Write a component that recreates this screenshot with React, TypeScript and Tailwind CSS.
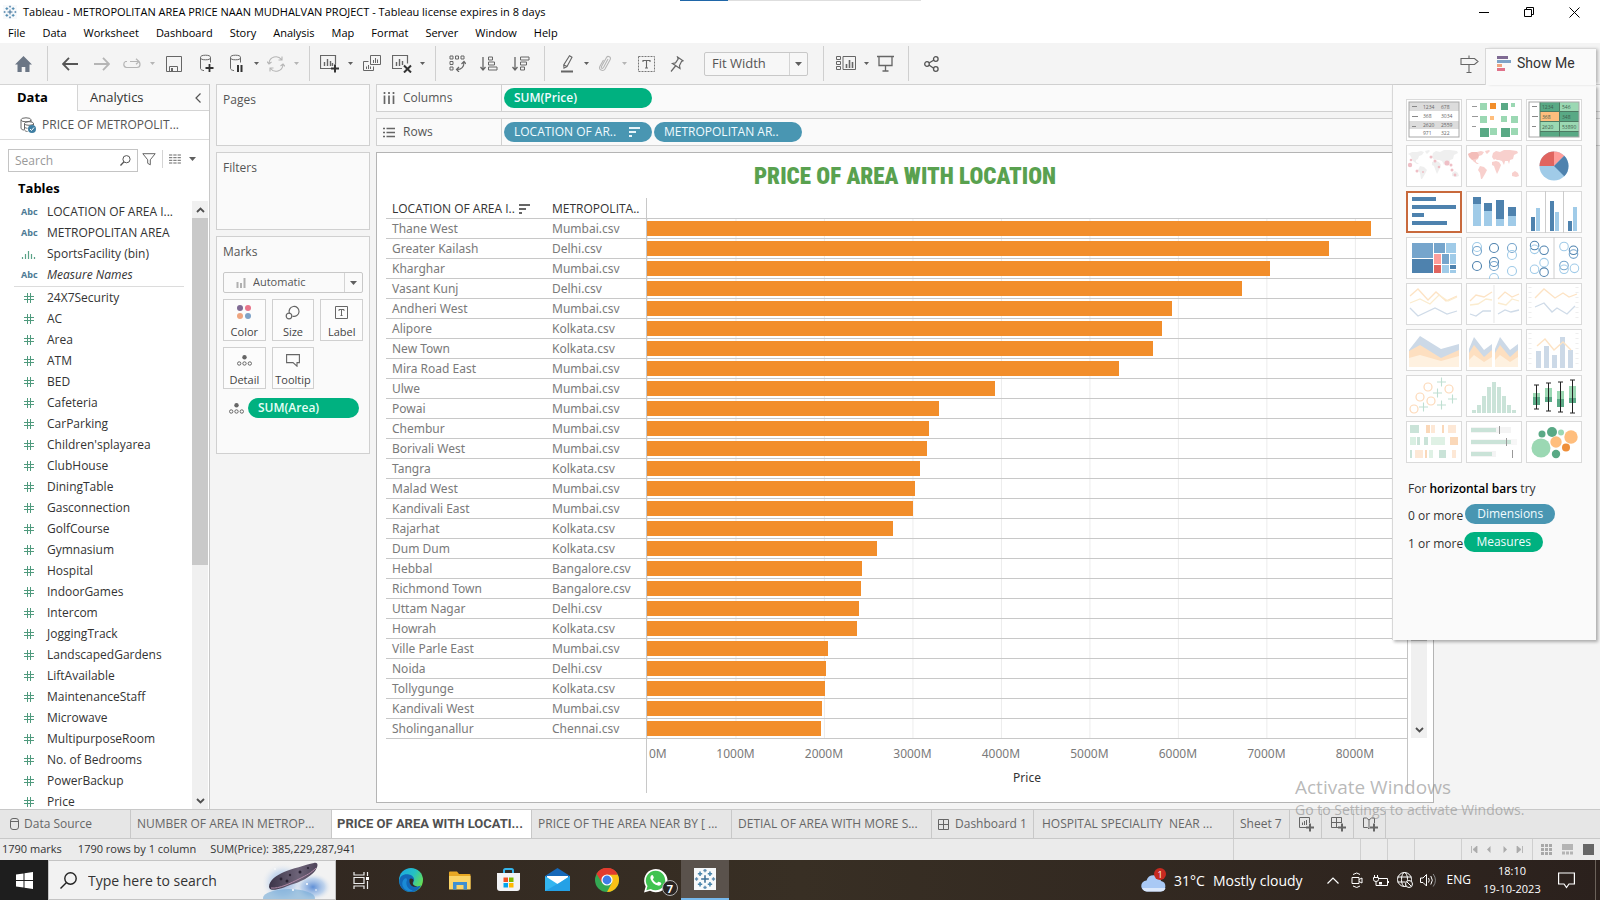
import React from "react";

const dimensions = [
  { kind: "abc", name: "LOCATION OF AREA I..." },
  { kind: "abc", name: "METROPOLITAN AREA" },
  { kind: "bin", name: "SportsFacility (bin)" },
  { kind: "abc", name: "Measure Names", italic: true },
];

const measures = [
  "24X7Security", "AC", "Area", "ATM", "BED", "Cafeteria", "CarParking", "Children'splayarea",
  "ClubHouse", "DiningTable", "Gasconnection", "GolfCourse", "Gymnasium", "Hospital",
  "IndoorGames", "Intercom", "JoggingTrack", "LandscapedGardens", "LiftAvailable",
  "MaintenanceStaff", "Microwave", "MultipurposeRoom", "No. of Bedrooms", "PowerBackup", "Price",
];

const AXIS_MAX = 8588;
const ticks = [1000, 2000, 3000, 4000, 5000, 6000, 7000, 8000];
const pct = (v: number) => `${(v / AXIS_MAX) * 100}%`;

const rows: [string, string, number][] = [
  ["Thane West", "Mumbai.csv", 8185],
  ["Greater Kailash", "Delhi.csv", 7707],
  ["Kharghar", "Mumbai.csv", 7044],
  ["Vasant Kunj", "Delhi.csv", 6721],
  ["Andheri West", "Mumbai.csv", 5937],
  ["Alipore", "Kolkata.csv", 5822],
  ["New Town", "Kolkata.csv", 5718],
  ["Mira Road East", "Mumbai.csv", 5338],
  ["Ulwe", "Mumbai.csv", 3931],
  ["Powai", "Mumbai.csv", 3297],
  ["Chembur", "Mumbai.csv", 3182],
  ["Borivali West", "Mumbai.csv", 3159],
  ["Tangra", "Kolkata.csv", 3089],
  ["Malad West", "Mumbai.csv", 3032],
  ["Kandivali East", "Mumbai.csv", 3009],
  ["Rajarhat", "Kolkata.csv", 2779],
  ["Dum Dum", "Kolkata.csv", 2594],
  ["Hebbal", "Bangalore.csv", 2433],
  ["Richmond Town", "Bangalore.csv", 2420],
  ["Uttam Nagar", "Delhi.csv", 2397],
  ["Howrah", "Kolkata.csv", 2374],
  ["Ville Parle East", "Mumbai.csv", 2040],
  ["Noida", "Delhi.csv", 2028],
  ["Tollygunge", "Kolkata.csv", 2017],
  ["Kandivali West", "Mumbai.csv", 1982],
  ["Sholinganallur", "Chennai.csv", 1966],
];

type SvgProps = { w: number; h: number; children: React.ReactNode; className?: string };
const Svg = ({ w, h, children, className = "" }: SvgProps) => (
  <svg width={w} height={h} viewBox={`0 0 ${w} ${h}`} fill="none" className={`block shrink-0 ${className}`} aria-hidden="true">
    {children}
  </svg>
);

const Caret = ({ light = false }: { light?: boolean }) => (
  <Svg w={7} h={4}><path d="M0 0h7L3.5 4z" fill={light ? "#b5b5b5" : "#5f5f5f"} /></Svg>
);
const CaretButton = ({ label, light = false }: { label: string; light?: boolean }) => (
  <button aria-label={label} className="flex h-full w-3 shrink-0 items-center justify-center">
    <Svg w={5} h={3}><path d="M0 0h5L2.5 3z" fill={light ? "#b5b5b5" : "#5f5f5f"} /></Svg>
  </button>
);
const Sep = ({ className = "" }: { className?: string }) => <span className={`h-[35px] w-px shrink-0 bg-[#cfcfcf] ${className}`} />;

const Tool = ({ label, width = "w-8", children }: { label: string; width?: string; children: React.ReactNode }) => (
  <button aria-label={label} className={`flex h-full shrink-0 items-center justify-center ${width}`}>{children}</button>
);

const INK = "#666";
const PALE = "#b5b5b5";

const Cylinder = () => (
  <>
    <ellipse cx="6.5" cy="3.5" rx="5" ry="2.3" stroke={INK} />
    <path d="M1.500 3.500v11c0 1 1.500 1.800 3.500 2.100M11.500 3.500v5" stroke={INK} />
  </>
);

const TableauMark = ({ size }: { size: number }) => (
  <svg width={size} height={size} viewBox="0 0 20 20" fill="none" className="block shrink-0" aria-hidden="true">
    <rect width="20" height="20" fill="#f7f9fb" />
    <path d="M10 6.500v7M6.500 10h7" stroke="#3c6e96" strokeWidth="1.400" />
    <path d="M10 .8v3M8.500 2.300h3M10 16.200v3M8.500 17.700h3M2.300 8.500v3M.8 10h3M17.700 8.500v3M16.200 10h3" stroke="#5d8cb0" strokeWidth="1.200" />
    <path d="M5.500 3.200v4M3.500 5.200h4M14.500 3.200v4M12.500 5.200h4M5.500 12.800v4M3.500 14.800h4M14.500 12.800v4M12.500 14.800h4" stroke="#4a86ad" strokeWidth="1.400" />
  </svg>
);

const SortBars = ({ color }: { color: string }) => (
  <Svg w={11} h={10}><path d="M0 1h11M0 5h7M0 9h3" stroke={color} strokeWidth="2" /></Svg>
);

const DetailDots = () => (
  <Svg w={15} h={11}>
    <circle cx="7.500" cy="2.200" r="2.200" fill={INK} />
    <circle cx="2.200" cy="8.500" r="1.700" stroke={INK} /><circle cx="7.500" cy="8.500" r="1.700" stroke={INK} /><circle cx="12.800" cy="8.500" r="1.700" stroke={INK} />
  </Svg>
);

function TitleAndMenu() {
  const menus = ["File", "Data", "Worksheet", "Dashboard", "Story", "Analysis", "Map", "Format", "Server", "Window", "Help"];
  return (
    <header className="relative shrink-0 bg-white text-[11px] text-black">
      <div className="absolute left-[680px] top-0 flex h-px w-[241px] bg-[#dedede]"><span className="w-12 bg-[#1f66a8]" /></div>
      <div className="flex h-6 items-center pl-[3px]">
        <TableauMark size={14} />
        <h1 className="ml-1.5 text-[11px]">Tableau - METROPOLITAN AREA PRICE NAAN MUDHALVAN PROJECT - Tableau license expires in 8 days</h1>
        <div className="ml-auto flex items-center gap-[35px] pr-5">
          <button aria-label="Minimize"><Svg w={10} h={10}><path d="M0 5.500h10" stroke="#000" /></Svg></button>
          <button aria-label="Restore"><Svg w={10} h={10}><path d="M.5 2.500h7v7h-7zM2.500 2.500v-2h7v7h-2" stroke="#000" /></Svg></button>
          <button aria-label="Close"><Svg w={11} h={11}><path d="M.5.5l10 10M10.500.5l-10 10" stroke="#000" /></Svg></button>
        </div>
      </div>
      <nav className="flex h-[19px] items-center gap-[17px] px-2">
        {menus.map((m) => <button key={m}>{m}</button>)}
      </nav>
    </header>
  );
}

function Toolbar() {
  return (
    <div className="flex h-[41px] shrink-0 items-center bg-[#f4f4f4]" role="toolbar" aria-label="Worksheet toolbar">
      <Tool label="Home" width="w-[47px]">
        <Svg w={17} h={16}><path d="M8.500 0L17 8.500h-2.500V16h-4.200v-5H6.700v5H2.500V8.500H0z" fill="#6b7685" /></Svg>
      </Tool>
      <Sep className="mr-1.5" />
      <Tool label="Back"><Svg w={16} h={14}><path d="M7 .8L1 7l6 6.200M1 7h15" stroke="#555" strokeWidth="1.800" /></Svg></Tool>
      <Tool label="Forward"><Svg w={16} h={14}><path d="M9 .8L15 7l-6 6.200M15 7H0" stroke={PALE} strokeWidth="1.800" /></Svg></Tool>
      <Tool label="Replay" width="w-7"><Svg w={18} h={12}><path d="M4 3.500H2.500Q.8 4 .8 6.500T3.500 9.500H14q3 0 3-3t-2.500-3H7M13 .8l3 2.700-3 2.700" stroke={PALE} strokeWidth="1.200" /></Svg></Tool>
      <CaretButton label="Replay options" light />
      <Tool label="Save"><Svg w={16} h={16}><path d="M.5.500h15v15H.5zM3.500 15.500v-5h8v5" stroke={INK} /><path d="M5 12h2v3.500H5z" fill={INK} /></Svg></Tool>
      <Tool label="New data source"><Svg w={15} h={19}><Cylinder /><path d="M10.500 10v8M6.500 14h8" stroke="#333" strokeWidth="1.800" /></Svg></Tool>
      <Tool label="Pause auto updates" width="w-7"><Svg w={15} h={19}><Cylinder /><path d="M9 11v7M12.500 11v7" stroke="#333" strokeWidth="2" /></Svg></Tool>
      <CaretButton label="Pause options" />
      <Tool label="Refresh" width="w-7"><Svg w={18} h={16}><path d="M2 7a7 7 0 0 1 12.500-3.500M16 9a7 7 0 0 1-12.500 3.500M15 .5v3.500h-3.500M3 15.500V12h3.500M0 5.500L2 8l2.500-2M18 10.500L16 8l-2.500 2" stroke={PALE} strokeWidth="1.100" /></Svg></Tool>
      <CaretButton label="Refresh options" light />
      <Sep className="ml-[7px] mr-1.5" />
      <Tool label="New worksheet" width="w-7"><Svg w={20} h={18}><path d="M12 13.500H.5v-13h15v9" stroke={INK} strokeWidth="1.200" /><path d="M4.500 7v4M7.500 4v7M10.500 6v5M12.500 8v3" stroke={INK} strokeWidth="1.400" /><path d="M15 9.500v8M11 13.500h8" stroke="#333" strokeWidth="2" /></Svg></Tool>
      <CaretButton label="New worksheet options" />
      <Tool label="Duplicate"><Svg w={18} h={17}><path d="M7.500.5h10v9h-10zM5.500 6.500h-5v9h10v-4" stroke={INK} /><path d="M10.500 5v3M12.500 3v5M14.500 4.500v3.500M3.500 11.500v2.500M5.500 10v4M7.500 11.500V14" stroke={INK} /></Svg></Tool>
      <Tool label="Clear sheet" width="w-7"><Svg w={20} h={18}><path d="M10 13.500H.5v-13h15v8" stroke={INK} strokeWidth="1.200" /><path d="M4.500 7v4M7.500 4v7M10.500 6v4" stroke={INK} strokeWidth="1.400" /><path d="M12 10.500l7 7M19 10.500l-7 7" stroke="#333" strokeWidth="2" /></Svg></Tool>
      <CaretButton label="Clear options" />
      <Sep className="ml-[7px] mr-[5px]" />
      <Tool label="Swap rows and columns"><Svg w={17} h={17}><path d="M1 1h3v3H1zM6.500 1h3v3h-3zM12 1h3v3h-3zM1 6.500h3v3H1zM1 12h3v3H1z" stroke={INK} /><path d="M15 7.500c0 4-2.500 7-7 7M12.500 9l2.500-2.500L17 9M10 12l-2.500 2.500L10 17" stroke={INK} strokeWidth="1.200" /></Svg></Tool>
      <Tool label="Sort ascending"><Svg w={18} h={16}><path d="M3 1v12M.5 11L3 14l2.500-3" stroke={INK} strokeWidth="1.300" /><path d="M8.500 1h4v3h-4zM8.500 6h6v3h-6zM8.500 11h8.500v3H8.500z" stroke={INK} /></Svg></Tool>
      <Tool label="Sort descending"><Svg w={18} h={16}><path d="M3 1v12M.5 11L3 14l2.500-3" stroke={INK} strokeWidth="1.300" /><path d="M8.500 1H17v3H8.500zM8.500 6h6v3h-6zM8.500 11h4v3h-4z" stroke={INK} /></Svg></Tool>
      <Sep className="ml-[7px] mr-[9px]" />
      <Tool label="Highlight" width="w-[26px]"><Svg w={14} h={18}><path d="M9.500.8l2.500 1.400-5 9.300-3 1.700-.3-3.300zM4 10l3 1.500" stroke={INK} strokeWidth="1.100" /><path d="M1 16.500h12" stroke={INK} strokeWidth="2" /></Svg></Tool>
      <CaretButton label="Highlight options" />
      <Tool label="Group members" width="w-[26px]"><Svg w={14} h={17}><path d="M10 4L5.500 12.500c-1 1.600-2.800.7-2-1L8.500 2.500c1.300-2.200 5-.7 3.700 2L7 14c-1.700 2.800-6.800 1-5.200-2.500L5.500 5" stroke={PALE} strokeWidth="1.100" /></Svg></Tool>
      <CaretButton label="Group options" light />
      <Tool label="Show mark labels"><Svg w={17} h={16}><rect x=".5" y=".5" width="16" height="15" stroke="#777" strokeDasharray="2 1" /><path d="M5 6V4.500h7V6M8.500 4.500v7.500M7 12h3" stroke={INK} strokeWidth="1.100" /></Svg></Tool>
      <Tool label="Fix axes" width="w-[30px]"><Svg w={14} h={16}><path d="M7.500 1l5.500 3.800-1.500.7-2 4 .5 3-7.500-5 3-.6 2.600-3.700zM5.500 10L1 15.500" stroke={INK} strokeWidth="1.200" /></Svg></Tool>
      <label className="relative ml-3 flex h-6 w-[104px] shrink-0 items-center rounded-xs border border-[#c8c8c8] bg-[#f7f7f7]">
        <span className="sr-only">Fit</span>
        <select className="h-full w-full appearance-none bg-transparent pl-[7px] text-[13px] text-[#555] outline-none"><option>Fit Width</option></select>
        <span className="pointer-events-none absolute inset-y-0 right-0 flex w-[18px] items-center justify-center border-l border-[#d4d4d4]"><Caret /></span>
      </label>
      <Sep className="ml-[15px] mr-2" />
      <Tool label="Show or hide cards" width="w-7"><Svg w={20} h={15}><path d="M.5.500h4v3h-4zM.5 5.500h4v3h-4zM.5 10.500h4v3h-4zM7 .500h12.500v13H7z" stroke={INK} /><path d="M10.500 8v4M13.500 4v8M16.500 6v6" stroke={INK} strokeWidth="1.600" /></Svg></Tool>
      <CaretButton label="Card options" />
      <Tool label="Presentation mode" width="w-[26px]"><Svg w={17} h={17}><path d="M0 1.500h17M2 1.500v9h13v-9M8.500 10.500v5M5.500 16h6" stroke={INK} strokeWidth="1.300" /></Svg></Tool>
      <Sep className="ml-2.5 mr-1.5" />
      <Tool label="Share"><Svg w={15} h={16}><path d="M5 7l5-3M5 9l5 3.500" stroke="#555" strokeWidth="1.300" /><circle cx="3" cy="8" r="2.300" stroke="#555" strokeWidth="1.300" /><circle cx="11.800" cy="3" r="2.300" stroke="#555" strokeWidth="1.300" /><circle cx="11.800" cy="13" r="2.300" stroke="#555" strokeWidth="1.300" /></Svg></Tool>
      <span className="ml-auto mr-[115px]">
        <Tool label="Guide"><Svg w={19} h={18}><path d="M1 3.500h13.500l3.500 3-3.500 3H1zM9 .500v3M9 9.500v8M6.500 17.500h5" stroke={INK} strokeWidth="1.100" /></Svg></Tool>
      </span>
    </div>
  );
}

const Abc = () => <span className="w-[18px] text-[9px] font-bold text-[#4c7a94]">Abc</span>;
const Hash = () => (
  <span className="flex w-4 justify-center"><Svg w={10} h={10}><path d="M3.500 0v10M6.500 0v10M0 3.500h10M0 6.500h10" stroke="#4f9a7d" /></Svg></span>
);

function ScrollArrow({ down = false }: { down?: boolean }) {
  return (
    <button aria-label={down ? "Scroll down" : "Scroll up"} className="flex h-[17px] w-full shrink-0 items-center justify-center">
      <Svg w={9} h={6}><path d={down ? "M1 1l3.500 3.500L8 1" : "M1 5l3.500-3.500L8 5"} stroke="#505050" strokeWidth="1.800" /></Svg>
    </button>
  );
}

function DataPane() {
  return (
    <aside className="flex w-[210px] shrink-0 flex-col border-r border-[#c8c8c8] bg-white text-[#333]">
      <div className="flex h-[27px] shrink-0 border-t border-[#d4d4d4] text-[13px]">
        <button className="w-[77px] pr-3 font-bold text-black">Data</button>
        <button className="flex-1 border-b border-l border-[#d4d4d4] bg-[#fafafa] pl-3 text-left">Analytics</button>
        <button aria-label="Collapse pane" className="w-[22px] border-b border-[#d4d4d4] bg-[#fafafa]"><Svg w={6} h={10} className="ml-2"><path d="M5.500.5L1 5l4.500 4.500" stroke="#555" strokeWidth="1.200" /></Svg></button>
      </div>
      <div className="flex h-[29px] shrink-0 items-center border-b border-[#dcdcdc] pl-5">
        <Svg w={16} h={16}>
          <ellipse cx="6" cy="2.800" rx="5" ry="2" stroke={INK} /><path d="M1 3v8c0 1.200 1.500 2 3 2M11 3v2" stroke={INK} />
          <ellipse cx="9" cy="6.500" rx="4.500" ry="1.800" stroke={INK} /><path d="M4.500 6.500v6c0 1.200 1.500 2 3 2M4.500 9.500c0 1 1.500 1.800 3 1.800M13.500 6.500v2" stroke={INK} />
          <circle cx="12" cy="12" r="4" fill="#3f7fa3" /><path d="M10 12l1.500 1.500 2.500-3" stroke="#fff" />
        </Svg>
        <span className="ml-1.5 text-[12px] text-[#555]">PRICE OF METROPOLIT...</span>
      </div>
      <div className="flex h-[38px] shrink-0 items-center pl-2">
        <label className="mt-0.5 flex h-[23px] w-[130px] items-center border border-[#c4c4c4] pr-1.5">
          <span className="sr-only">Search</span>
          <input placeholder="Search" className="h-full w-full min-w-0 bg-transparent pl-1.5 text-[12px] outline-none placeholder:text-[#999]" />
          <Svg w={11} h={11}><circle cx="6.500" cy="4.200" r="3.600" stroke="#555" /><path d="M4 6.800L.5 10.500" stroke="#555" strokeWidth="1.300" /></Svg>
        </label>
        <button aria-label="Filter fields" className="ml-1"><Svg w={14} h={13}><path d="M.8.700h12.400L8.300 6.800v5l-2.600-1.500V6.800z" stroke={INK} /></Svg></button>
        <span className="ml-1.5 h-[18px] w-px bg-[#d4d4d4]" />
        <button aria-label="View as" className="ml-1.5 flex items-center gap-2"><Svg w={12} h={10}><path d="M0 1h12M0 3.700h12M0 6.300h12M0 9h12" stroke={INK} strokeDasharray="3.300 1" /></Svg><Caret /></button>
      </div>
      <h2 className="h-[23px] shrink-0 pl-[18px] text-[13px] leading-[20px] font-bold text-black">Tables</h2>
      <div className="flex min-h-0 flex-1">
        <div className="min-w-0 flex-1 overflow-hidden text-[12px]">
          <ul className="mr-2 ml-3.5 border-b border-[#dcdcdc] pb-px">
            {dimensions.map((d) => (
              <li key={d.name} className="flex h-[21px] items-center pl-[7px] whitespace-nowrap">
                {d.kind === "abc" ? <Abc /> : <Svg w={18} h={10}><path d="M1.500 8v2M4.500 5v5M7.500 2v8M10.500 5v5M13.500 8v2" stroke="#5aa287" strokeWidth="1.200" /></Svg>}
                <span className={d.italic ? "ml-2 italic" : "ml-2"}>{d.name}</span>
              </li>
            ))}
          </ul>
          <ul className="ml-3.5">
            {measures.map((m) => (
              <li key={m} className="flex h-[21px] items-center pl-[7px] whitespace-nowrap"><Hash /><span className="ml-2.5">{m}</span></li>
            ))}
          </ul>
        </div>
        <div className="mr-px flex w-4 shrink-0 flex-col bg-[#f0f0f0]">
          <ScrollArrow />
          <span className="block h-[57%] bg-[#c9c9c9]" />
          <span className="flex-1" />
          <ScrollArrow down />
        </div>
      </div>
    </aside>
  );
}

const MarkButton = ({ label, children }: { label: string; children: React.ReactNode }) => (
  <button className="flex h-[42px] flex-col items-center justify-between border border-[#d0d0d0] bg-[#fcfcfc] text-[11px] leading-[16px] text-[#444]">
    <span className="flex h-[26px] items-center">{children}</span>
    {label}
  </button>
);

function Cards() {
  return (
    <section className="ml-1.5 flex w-[154px] shrink-0 flex-col gap-1.5 text-[12px] text-[#555]">
      <div className="h-[62px] border border-[#d0d0d0] bg-[#fafafa] px-1.5 pt-1.5">Pages</div>
      <div className="h-[78px] border border-[#d0d0d0] bg-[#fafafa] px-1.5 pt-1.5">Filters</div>
      <div className="h-[218px] border border-[#d0d0d0] bg-[#fafafa] px-1.5 pt-1.5">
        <h3>Marks</h3>
        <label className="relative mt-[11px] flex h-[21px] items-center rounded-xs border border-[#c8c8c8] pl-3">
          <span className="sr-only">Mark type</span>
          <Svg w={10} h={10}><path d="M1.500 4v6M5 5v5M8.500 0v10" stroke="#b0b0b0" strokeWidth="2" /></Svg>
          <select className="h-full w-full appearance-none bg-transparent pl-[7px] text-[11px] outline-none"><option>Automatic</option></select>
          <span className="pointer-events-none absolute inset-y-0 right-0 flex w-[18px] items-center justify-center border-l border-[#d4d4d4]"><Caret /></span>
        </label>
        <div className="mt-1.5 grid grid-cols-3 gap-1.5">
          <MarkButton label="Color"><Svg w={14} h={14}><circle cx="3" cy="3" r="3" fill="#7f6a93" /><circle cx="11" cy="3" r="3" fill="#e8748a" /><circle cx="3" cy="11" r="3" fill="#efa57f" /><circle cx="11" cy="11" r="3" fill="#7fa3c7" /></Svg></MarkButton>
          <MarkButton label="Size"><Svg w={15} h={15}><path d="M4.500 8.500A5 5 0 1 1 7.500 11.200" stroke={INK} strokeWidth="1.200" /><circle cx="4" cy="11" r="2.800" stroke={INK} strokeWidth="1.200" /></Svg></MarkButton>
          <MarkButton label="Label"><Svg w={13} h={13}><path d="M.5.5h12v12H.5z" stroke={INK} /><path d="M4 5V3.500h5V5M6.500 3.500v6M5.500 9.500h2" stroke={INK} /></Svg></MarkButton>
          <MarkButton label="Detail"><DetailDots /></MarkButton>
          <MarkButton label="Tooltip"><Svg w={14} h={13}><path d="M.6.600h12.800v8h-2.400v3.600L7 8.600H.6z" stroke={INK} strokeWidth="1.100" /></Svg></MarkButton>
        </div>
        <div className="mt-[9px] flex items-center gap-1 pl-1.5">
          <DetailDots />
          <button className="mr-1 h-5 flex-1 rounded-full bg-[#00b180] pl-2.5 text-left text-[12px] font-semibold text-[#e6fff6]">SUM(Area)</button>
        </div>
      </div>
    </section>
  );
}

const Pill = ({ children, blue = false }: { children: React.ReactNode; blue?: boolean }) => (
  <button className={`flex h-5 w-[148px] shrink-0 items-center justify-between rounded-full pr-3 pl-2.5 text-[#f0fbff] ${blue ? "bg-[#4996b2] font-medium" : "bg-[#00b180] font-semibold"}`}>{children}</button>
);

function Shelves() {
  return (
    <div className="flex flex-col gap-1.5 text-[12px] text-[#555]">
      <div className="flex h-7 items-center border border-r-0 border-[#d0d0d0] bg-[#fafafa]">
        <div className="flex h-full w-[125px] items-center gap-2 border-r border-[#d0d0d0] pl-1.5">
          <Svg w={12} h={12}><path d="M1.500 0v2M6 0v2M10.500 0v2M1.500 3.500V12M6 3.500V12M10.500 3.500V12" stroke={INK} strokeWidth="1.700" /></Svg>Columns
        </div>
        <div className="ml-0.5"><Pill>SUM(Price)</Pill></div>
      </div>
      <div className="flex h-7 items-center border border-r-0 border-[#d0d0d0] bg-[#fafafa]">
        <div className="flex h-full w-[125px] items-center gap-2 border-r border-[#d0d0d0] pl-1.5">
          <Svg w={12} h={11}><path d="M0 1.500h2M0 5.500h2M0 9.500h2M3.500 1.500H12M3.500 5.500H12M3.500 9.500H12" stroke={INK} strokeWidth="1.700" /></Svg>Rows
        </div>
        <div className="ml-0.5 flex gap-0.5">
          <Pill blue>LOCATION OF AR..<SortBars color="#e6f4fa" /></Pill>
          <Pill blue>METROPOLITAN AR..</Pill>
        </div>
      </div>
    </div>
  );
}

function Sheet() {
  const gridlines = {
    backgroundImage: "linear-gradient(to right, #ececec 1px, transparent 1px)",
    backgroundSize: `${pct(1000)} 100%`,
  };
  return (
    <section className="mt-1.5 mr-[166px] mb-1.5 flex min-h-0 flex-1 flex-col border border-[#b4b4b4] bg-white">
      <h2 className="flex h-[45px] shrink-0 items-center justify-center pt-1 font-['Liberation_Sans_Narrow','Roboto_Condensed',Roboto,sans-serif] text-[23px] font-black text-[#59a14f]">PRICE OF AREA WITH LOCATION</h2>
      <div className="flex pl-[9px]">
        <table className="w-full table-fixed border-separate border-spacing-0 border-r border-[#c4c4c4] font-['Noto_Sans',sans-serif] text-[12px] leading-[19px] text-[#7a7a7a]">
          <colgroup><col className="w-[160px]" /><col className="w-[100px]" /><col /></colgroup>
          <thead>
            <tr className="h-[21px] text-left font-['Open_Sans',sans-serif] text-[#333]">
              <th className="border-b border-[#c8c8c8] p-0 pt-px pl-1.5 font-normal"><span className="flex items-center gap-1 whitespace-nowrap">LOCATION OF AREA I..<SortBars color="#666" /></span></th>
              <th className="border-b border-[#c8c8c8] p-0 pt-px pl-1.5 font-normal whitespace-nowrap">METROPOLITA..</th>
              <th aria-label="Price" className="border-b border-l border-[#c8c8c8] p-0" />
            </tr>
          </thead>
          <tbody>
            {rows.map(([place, city, price]) => (
              <tr key={place} className="h-5">
                <td className="border-b border-[#c8c8c8] p-0 pl-1.5">{place}</td>
                <td className="border-b border-[#c8c8c8] p-0 pl-1.5">{city}</td>
                <td className="border-b border-l border-[#c8c8c8] p-0">
                  <div className="flex h-[19px] items-center" style={gridlines}>
                    <span className="block h-[15px] bg-[#f28e2b]" style={{ width: pct(price) }} />
                  </div>
                </td>
              </tr>
            ))}
          </tbody>
          <tfoot>
            <tr>
              <td colSpan={2} className="p-0" />
              <td className="h-[54px] border-l border-[#c8c8c8] p-0 align-top">
                <div className="flex pt-[5px]">
                  <span className="pl-0.5" style={{ width: pct(500) }}>0M</span>
                  {ticks.map((t) => <span key={t} className="text-center" style={{ width: pct(1000) }}>{t}M</span>)}
                </div>
                <div className="pt-[5px] text-center text-[#333]">Price</div>
              </td>
            </tr>
          </tfoot>
        </table>
        <div className="mr-1.5 mb-[55px] ml-[3px] flex w-4 shrink-0 flex-col justify-end bg-[#f0f0f0]">
          <span className="mb-auto block h-[82%] bg-[#c2c2c2]" />
          <ScrollArrow down />
        </div>
      </div>
    </section>
  );
}

/* ---- Show Me gallery ---- */
type Box = [number, number, number, number, string];
const Boxes = ({ data }: { data: Box[] }) => <>{data.map(([x, y, w, h, c], i) => <rect key={i} x={x} y={y} width={w} height={h} fill={c} />)}</>;
const Rings = ({ data }: { data: [number, number, string][] }) => <>{data.map(([x, y, c], i) => <circle key={i} cx={x} cy={y} r="4.500" stroke={c} strokeWidth="1.100" />)}</>;
const B = "#4e82ae", L = "#a0cbe8", M = "#76a5cc", G = "#59a985", N = "#9bd8b3", O = "#f28e2b", P = "#ffbe7d";
const worldPath = "M2 9l4-2 5 0 4-1 3 1-2 3-3 1-1 3-2 1 0 2 3 2-2 0-4-3-2-4-1-2zM14 21l4 1 3 3-2 4-3 5-1 0-1-6-2-3zM19 6l4-1 1 1-3 3-1-1zM26 12l1-4 3-2 4 1 4-2 6 0 7 1 1 2-4 2-1 4-3 1-1 4-1-3-3 0-1 4-2-4-3-1-2 0-2-1-1 1zM26 17l4-1 3 1 2 3-2 5-2 4-2-5-1-3-2-1zM46 28l3-2 3 2 1 3-3 1-4-1z";

const thumbs: { name: string; art: React.ReactNode }[] = [
  { name: "text table", art: <><Boxes data={[[3, 3, 50, 9, "#dcdcdc"], [3, 22, 50, 8, "#dcdcdc"], [6, 7, 5, 1, "#888"], [6, 17, 6, 1, "#888"], [6, 27, 4, 1, "#888"]]} /><rect x="3" y="3" width="50" height="35" stroke="#a8a8a8" /><g fill="#666" fontSize="5"><text x="17" y="10">1234</text><text x="35" y="10">678</text><text x="17" y="19">368</text><text x="35" y="19">3034</text><text x="17" y="28">2620</text><text x="35" y="28">2559</text><text x="17" y="36">971</text><text x="35" y="36">322</text></g></> },
  { name: "heat map", art: <Boxes data={[[6, 7, 5, 1, "#999"], [6, 17, 6, 1, "#999"], [6, 27, 4, 1, "#999"], [14, 4, 7, 7, N], [24, 4, 6, 6, O], [35, 4, 7, 7, G], [45, 4, 4, 4, N], [14, 17, 7, 7, N], [24, 17, 4, 4, P], [35, 17, 6, 6, N], [45, 17, 7, 7, N], [14, 29, 9, 9, G], [24, 29, 7, 7, N], [35, 29, 9, 9, G], [45, 29, 7, 7, N]]} /> },
  { name: "highlight table", art: <><Boxes data={[[6, 7, 5, 1, "#888"], [6, 17, 6, 1, "#888"], [6, 27, 4, 1, "#888"], [14, 3, 19, 9, G], [34, 3, 19, 9, N], [14, 13, 19, 9, P], [34, 13, 19, 9, G], [14, 23, 19, 9, N], [34, 23, 19, 9, N], [14, 33, 19, 5, G], [34, 33, 19, 5, G]]} /><path d="M14 3v35M33.500 3v35M14 12.500h39M14 22.500h39M14 32.500h39" stroke="#4d7a63" /><rect x="3" y="3" width="50" height="35" stroke="#a8a8a8" /><g fill="#3d5c4c" fontSize="5"><text x="16" y="10">1234</text><text x="36" y="10">546</text><text x="16" y="20">368</text><text x="36" y="20">348</text><text x="16" y="30">2620</text><text x="36" y="30">53890</text></g></> },
  { name: "symbol map", art: <><path d={worldPath} fill="#efefef" />{([[4, 20, 2.2], [5, 15, 1.300], [11, 26, 1.500], [17, 27, 1], [25, 12, 1.500], [29, 16, 1.500], [33, 22, 1.300], [41, 18, 2.600], [45, 20, 1.500], [46, 25, 1.500], [49, 30, 1.400]] as number[][]).map(([x, y, r], i) => <circle key={i} cx={x} cy={y} r={r} fill="#efbfc6" />)}</> },
  { name: "filled map", art: <><path d={worldPath} fill="#f8d0cd" /><path d="M2 9l4-2 5 0 2 3-1 3-6 2-3-3z" fill="#f3bdb9" /></> },
  { name: "pie chart", art: <><circle cx="28" cy="21" r="14.500" fill={L} /><path d="M28 21V6.500A14.500 14.500 0 0 0 13.500 21z" fill="#e0645f" /><path d="M28 21V6.500A14.500 14.500 0 0 1 38.250 10.750z" fill="#ff9d9a" /><path d="M28 21L38.250 10.750a14.500 14.500 0 0 1 0 20.500z" fill={B} /></> },
  { name: "horizontal bars", art: <Boxes data={[[6, 6, 24, 4, B], [6, 14, 44, 4, B], [6, 22, 12, 4, B], [6, 30, 35, 4, B]]} /> },
  { name: "stacked bars", art: <Boxes data={[[7, 6, 8, 7, B], [7, 13, 8, 22, L], [18, 12, 8, 8, B], [18, 20, 8, 15, L], [30, 9, 8, 19, B], [30, 28, 8, 7, L], [42, 16, 8, 9, B], [42, 25, 8, 10, L]]} /> },
  { name: "side-by-side bars", art: <Boxes data={[[5, 26, 4, 14, B], [10, 17, 4, 23, L], [19, 0, 1, 42, "#ccc"], [24, 10, 4, 30, B], [29, 21, 4, 19, L], [37, 0, 1, 42, "#ccc"], [42, 30, 4, 10, B], [47, 16, 4, 24, L]]} /> },
  { name: "treemap", art: <Boxes data={[[6, 6, 21, 15, M], [6, 22, 21, 14, B], [28, 6, 11, 10, M], [40, 6, 10, 10, L], [28, 17, 7, 10, "#ff9d9a"], [36, 17, 7, 10, M], [44, 17, 6, 10, L], [28, 28, 7, 8, "#e0645f"], [36, 28, 7, 8, L], [44, 28, 6, 4, B], [44, 33, 6, 3, L]]} /> },
  { name: "circle views", art: <Rings data={[[11, 10, L], [11, 14, M], [11, 29, B], [28, 11, B], [28, 25, B], [28, 29, M], [28, 41, L], [46, 11, M], [46, 18, L], [46, 34, L]]} /> },
  { name: "side-by-side circles", art: <g transform="scale(.95)"><path d="M29.500 0v44" stroke="#ccc" /><Rings data={[[9, 9, B], [9, 13, L], [19, 14, B], [19, 27, L], [9, 34, L], [19, 37, B], [40, 10, L], [50, 14, B], [50, 18, M], [40, 30, M], [40, 34, L], [51, 33, L]]} /></g> },
  { name: "continuous lines", art: <g strokeWidth="1.300"><path d="M4 13l8-7 10 11 8-8 10 9 11-5" stroke="#fde3c4" /><path d="M4 20l10-4 10 5 9-9 9 6 9-4" stroke="#fbeccf" /><path d="M4 25l8 8 17-8 12 6 10-3" stroke="#cfdbe8" /></g> },
  { name: "discrete lines", art: <g strokeWidth="1.300"><path d="M28 2v38" stroke="#ececec" /><path d="M4 18l6-6 8 2 8-5M32 16l7-7 7 5 7-3" stroke="#fde3c4" /><path d="M4 22l8-1 8-5 6 1M32 20l8 2 6-6 7 2" stroke="#fbeccf" /><path d="M4 31l6 2 7-5h8M32 31l7-4 6 2 8-2" stroke="#cfdbe8" /></g> },
  { name: "dual lines", art: <><path d="M9 15l9-9 11 9 8-5 6 4 8-3" stroke="#fde3c4" strokeWidth="1.300" /><path d="M9 24l9-4 8 9 5-4 10 6 8-8" stroke="#cfdbe8" strokeWidth="1.300" /><path d="M4 4v34M51 4v34" stroke="#eee" strokeDasharray="1 4" strokeWidth="3" /></> },
  { name: "area charts (continuous)", art: <><path d="M3 21L14 7l21 13 18-5v23H3z" fill="#ccd9e7" /><path d="M3 22l11-6 21 13 18-8v17H3z" fill="#fddfc0" /><path d="M3 29l11-3 21 6 18-5v11H3z" fill="#fef1e0" /></> },
  { name: "area charts (discrete)", art: <><path d="M3 20L8 8l10 13 8-6v23H3zM29 20L34 8l10 13 8-6v23H29z" fill="#ccd9e7" /><path d="M3 24l5-8 10 12 8-7v17H3zM29 24l5-8 10 12 8-7v17H29z" fill="#fddfc0" /><path d="M3 31l5-5 10 7 8-5v10H3zM29 31l5-5 10 7 8-5v10H29z" fill="#fef1e0" /></> },
  { name: "dual combination", art: <><Boxes data={[[10, 22, 5, 17, "#ccd9e7"], [18, 17, 5, 22, "#ccd9e7"], [26, 26, 5, 13, "#ccd9e7"], [34, 8, 5, 31, "#ccd9e7"], [42, 21, 5, 18, "#ccd9e7"]]} /><path d="M11 17l8-7 9 11 9-8 8 8" stroke="#fde3c4" strokeWidth="1.400" /><path d="M4 4v34M51 4v34" stroke="#eee" strokeDasharray="1 4" strokeWidth="3" /></> },
  { name: "scatter plot", art: <><g stroke="#fdd9b8" strokeWidth="1.200"><circle cx="8" cy="34" r="4" /><circle cx="14" cy="22" r="4" /><circle cx="22" cy="12" r="4" /><circle cx="25" cy="26" r="4" /><circle cx="43" cy="14" r="4" /></g><path d="M27 18h9M31.500 13.500v9M13 32h9M17.500 27.500v9M31 30h9M35.500 25.500v9M42 24h9M46.500 19.500v9M31 7h9M35.500 2.500v9" stroke="#bfdfd2" strokeWidth="1.100" /></> },
  { name: "histogram", art: <Boxes data={[3, 8, 17, 26, 31, 26, 17, 8, 3].map((h, i) => [6 + i * 5, 38 - h, 4, h, "#cae3d8"] as Box)} /> },
  { name: "box-and-whisker plot", art: <><Boxes data={[[7, 18, 7, 12, G], [7, 18, 7, 4, N], [19, 13, 7, 14, G], [19, 13, 7, 9, N], [31, 16, 7, 16, G], [31, 16, 7, 8, N], [43, 11, 7, 17, G], [43, 11, 7, 12, N]]} /><path d="M10.500 10v24M8 10h5M8 34h5M22.500 8v28M20 8h5M20 36h5M34.500 7v30M32 7h5M32 37h5M46.500 5v33M44 5h5M44 38h5" stroke="#222" /></> },
  { name: "gantt chart", art: <Boxes data={[[4, 4, 9, 8, "#cae3d8"], [20, 4, 4, 8, "#fad8b9"], [25, 4, 4, 8, "#fde8d6"], [36, 4, 2, 8, "#fad8b9"], [42, 4, 8, 8, "#fde8d6"], [4, 16, 6, 8, "#d9efe2"], [11, 16, 3, 8, "#cae3d8"], [18, 16, 4, 8, "#cae3d8"], [25, 16, 14, 8, "#dff1e5"], [44, 16, 8, 8, "#fad8b9"], [4, 29, 2, 8, "#cae3d8"], [9, 29, 8, 8, "#fde8d6"], [19, 29, 2, 8, "#fad8b9"], [23, 29, 4, 8, "#dff1e5"], [33, 29, 7, 8, "#cae3d8"], [46, 29, 4, 8, "#fde8d6"]]} /> },
  { name: "bullet graph", art: <Boxes data={[[5, 6, 40, 6, "#f4f4f4"], [5, 7, 25, 4, "#cae3d8"], [33, 5, 1, 8, "#999"], [5, 18, 46, 6, "#f7f7f7"], [5, 19, 40, 4, "#cae3d8"], [40, 17, 1, 8, "#999"], [5, 30, 25, 6, "#f4f4f4"], [5, 31, 21, 4, "#cae3d8"], [46, 29, 1, 8, "#999"]]} /> },
  { name: "packed bubbles", art: <><circle cx="15" cy="27" r="9.500" fill={N} /><circle cx="16" cy="13" r="3.500" fill={G} /><circle cx="26" cy="11" r="5" fill={G} /><circle cx="35" cy="11.500" r="3" fill={N} /><circle cx="45" cy="16" r="6.700" fill={P} /><circle cx="30" cy="21" r="5.700" fill={P} /><circle cx="40" cy="26.500" r="4" fill="#ef8f3a" /><circle cx="30" cy="33" r="4.200" fill={G} /></> },
];

function ShowMe() {
  return (
    <aside className="absolute top-[5px] right-1 z-10 w-[204px] text-[#333]">
      <div className="relative z-10 ml-auto w-[111px] border-t border-l border-[#d8d8d8] bg-[#fafafa] shadow-[3px_0_3px_-1px_rgba(0,0,0,0.25)]">
        <button className="flex h-9 w-full items-center gap-1.5 pb-[7px] pl-[11px] text-[14px]">
          <Svg w={14} h={15}><path d="M0 1.500h11" stroke="#7f6a93" strokeWidth="3" /><path d="M0 5.500h14" stroke="#7fa3c7" strokeWidth="3" /><path d="M0 9.500h5" stroke="#efa57f" strokeWidth="3" /><path d="M0 13.500h8" stroke="#e0728a" strokeWidth="3" /></Svg>
          <span className="font-['Roboto',sans-serif]">Show Me</span>
        </button>
      </div>
      <div className="border-l border-[#d8d8d8] bg-[#fafafa] pr-3.5 pb-[88px] pl-[13px] shadow-[2px_2px_3px_rgba(0,0,0,0.3)]">
        <div className="grid grid-cols-3 gap-1 pt-3.5">
          {thumbs.map((t) => (
            <button key={t.name} aria-label={t.name} className={t.name === "horizontal bars" ? "h-[42px] border-2 border-[#c8693c] bg-white" : "h-[42px] border border-[#dadada] bg-white"}>
              <svg viewBox="0 0 56 42" fill="none" className={t.name === "horizontal bars" ? "-m-0.5 block h-[42px] w-14" : "-m-px block h-[42px] w-14"} aria-hidden="true">{t.art}</svg>
            </button>
          ))}
        </div>
        <div className="pt-[17px] pl-0.5 text-[12px]">
          <p className="h-[18px] leading-[18px]">For <b className="font-semibold text-black">horizontal bars</b> try</p>
          <p className="mt-1.5 flex h-5 items-center gap-0.5"><span className="pt-1">0 or more</span><span className="flex h-5 w-[90px] items-center justify-center rounded-full bg-[#4996b2] font-medium text-[#f0fbff]">Dimensions</span></p>
          <p className="mt-2 flex h-5 items-center gap-px"><span className="pt-1">1 or more</span><span className="flex h-5 w-[79px] items-center justify-center rounded-full bg-[#00b180] font-medium text-[#f0fbff]">Measures</span></p>
        </div>
      </div>
    </aside>
  );
}

function SheetTabs() {
  const tab = "flex h-full shrink-0 items-center overflow-hidden border-r border-[#c8c8c8] whitespace-nowrap pl-1.5";
  return (
    <nav className="flex h-[30px] shrink-0 border-y border-[#c8c8c8] bg-[#e6e6e6] text-[12px] text-[#666]" aria-label="Sheets">
      <button className={`${tab} w-[131px] gap-0.5`}><Svg w={16} h={12}><rect x="4.500" y=".5" width="8" height="11" rx="2.500" stroke={INK} /><path d="M5 3.500h7" stroke={INK} /></Svg>Data Source</button>
      <button className={`${tab} w-[201px]`}>NUMBER OF AREA IN METROP...</button>
      <button className={`${tab} w-[200px] bg-white pl-[5px] font-['Roboto',sans-serif] text-[13px] font-bold text-[#505050]`}>PRICE OF AREA WITH LOCATI...</button>
      <button className={`${tab} w-[200px]`}>PRICE OF THE AREA NEAR BY [ ...</button>
      <button className={`${tab} w-[200px]`}>DETIAL OF AREA WITH MORE S...</button>
      <button className={`${tab} w-[102px] gap-1.5`}><Svg w={11} h={11}><path d="M.5.500h10v10H.5zM5.500.500v10M.5 5.500h10" stroke={INK} /></Svg>Dashboard 1</button>
      <button className={`${tab} w-[200px] pl-2 whitespace-pre`}>{"HOSPITAL SPECIALITY  NEAR ..."}</button>
      <button className={`${tab} w-14`}>Sheet 7</button>
      <button aria-label="New worksheet" className={`${tab} w-8 pl-[9px]`}><Svg w={16} h={15}><path d="M7 10.500H.5V.5h10V6" stroke={INK} /><path d="M3.500 5.500v2.500M5.500 4v4M7.500 3v5" stroke={INK} /><path d="M11 6.500v8M7 10.500h8" stroke={INK} strokeWidth="2" /></Svg></button>
      <button aria-label="New dashboard" className={`${tab} w-8 pl-[9px]`}><Svg w={16} h={15}><path d="M7 10.500H.5V.5h10V6M5.500.500v10M.5 5.500h10" stroke={INK} /><path d="M11 6.500v8M7 10.500h8" stroke={INK} strokeWidth="2" /></Svg></button>
      <button aria-label="New story" className={`${tab} w-8 pl-[9px]`}><Svg w={16} h={15}><path d="M6 12L4.500 10.500h-4V1h3L6 3l2.500-2h3v5M6 3v9" stroke={INK} /><path d="M11 6.500v8M7 10.500h8" stroke={INK} strokeWidth="2" /></Svg></button>
    </nav>
  );
}

function StatusBar() {
  const cell = "h-full border-l border-[#cfcfcf]";
  return (
    <div className="flex h-[21px] shrink-0 items-center bg-[#ebebeb] pl-0.5 text-[11px] text-[#333]">
      <span>1790 marks</span><span className="ml-4">1790 rows by 1 column</span><span className="ml-3.5">SUM(Price): 385,229,287,941</span>
      <div className="ml-auto flex h-full">
        <span className={`${cell} w-[127px]`} /><span className={`${cell} w-[27px]`} /><span className={`${cell} w-[27px]`} /><span className={`${cell} w-[47px]`} />
        <div className={`${cell} flex w-[71px] items-center justify-around px-1`}>
          {["M1.500 0v7M7 0v7L3 3.500z", "M5.500 0v7L2 3.500z", "M2.500 0v7L6 3.500z", "M6.500 0v7M1 0v7l4-3.500z"].map((d, i) => (
            <button key={d} aria-label={["First", "Previous", "Next", "Last"][i]}><Svg w={8} h={7}><path d={d} fill="#ababab" stroke={i % 3 === 0 ? "#ababab" : "none"} strokeWidth=".8" /></Svg></button>
          ))}
        </div>
        <div className={`${cell} flex w-[68px] items-center gap-2.5 pl-2`}>
          <button aria-label="Tabs view"><Svg w={11} h={11}><path d="M0 1.500h11M0 5.500h11M0 9.500h11" stroke="#a8a8a8" strokeWidth="3" strokeDasharray="3 1" /></Svg></button>
          <button aria-label="Filmstrip view"><Svg w={11} h={11}><path d="M0 0h11v6H0z" fill="#b4b4b4" /><path d="M0 9h11" stroke="#b4b4b4" strokeWidth="3" strokeDasharray="3 1" /></Svg></button>
          <button aria-label="Sheet view"><Svg w={11} h={11}><path d="M0 0h11v11H0z" fill="#666" /></Svg></button>
        </div>
      </div>
    </div>
  );
}

function Whale() {
  return (
    <Svg w={72} h={38}>
      <defs>
        <radialGradient id="mist"><stop offset="0" stopColor="#5f8fd6" /><stop offset=".6" stopColor="#a9c6ea" stopOpacity=".7" /><stop offset="1" stopColor="#f2f2f2" stopOpacity="0" /></radialGradient>
        <linearGradient id="rock" x2="1"><stop stopColor="#3b3448" /><stop offset=".6" stopColor="#6d6378" /><stop offset="1" stopColor="#4e4459" /></linearGradient>
      </defs>
      <ellipse cx="20" cy="22" rx="22" ry="20" fill="url(#mist)" opacity=".7" /><ellipse cx="50" cy="26" rx="19" ry="14" fill="url(#mist)" /><ellipse cx="26" cy="37" rx="26" ry="9" fill="#6fa9d6" opacity=".6" />
      <path d="M6 26c0-7 8-12 15-15C29 8 42 4 51 2c5-1 4 4 1 8-5 6-14 11-25 14-7 3-20 8-21 2z" fill="url(#rock)" />
      <path d="M8 27c8 1 20-5 28-9s12-6 17-11" stroke="#b28ca8" />
      <g fill="#2a2334"><circle cx="18" cy="18" r="1.400" /><circle cx="27" cy="14" r="1.200" /><circle cx="24" cy="20" r="1.500" /><circle cx="37" cy="11" r="1.500" /><circle cx="45" cy="7" r="1.100" /></g>
      <g fill="#fff"><circle cx="30" cy="29" r="1" /><circle cx="44" cy="23" r="1" /><circle cx="53" cy="29" r=".8" /><circle cx="12" cy="8" r=".8" /></g>
    </Svg>
  );
}

function Taskbar() {
  const app = "flex h-full w-[49px] shrink-0 items-center justify-center";
  return (
    <footer className="flex h-10 shrink-0 items-center bg-linear-to-r from-[#2e241f] via-[#382f24] to-[#2b211d] text-white">
      <button aria-label="Start" className="flex h-full w-12 shrink-0 items-center justify-center bg-[#1e1e1e]"><Svg w={17} h={17}><path d="M0 2.500L7.500 1.500V8H0zM8.500 1.300L17 0v8H8.500zM0 9h7.500v6.500L0 14.500zM8.500 9H17v8l-8.500-1.300z" fill="#fff" /></Svg></button>
      <label className="flex h-full w-72 shrink-0 items-center border border-[#c4c4c4] bg-[#f2f2f2] pl-[11px]">
        <span className="sr-only">Type here to search</span>
        <Svg w={17} h={17}><circle cx="10.500" cy="6.500" r="5.700" stroke="#222" strokeWidth="1.400" /><path d="M6.500 10.500L.5 16.500" stroke="#222" strokeWidth="1.400" /></Svg>
        <input placeholder="Type here to search" className="ml-[11px] h-full min-w-0 flex-1 bg-transparent text-[14px] outline-none placeholder:text-[#333]" />
        <Whale />
      </label>
      <button aria-label="Task view" className={`${app} ml-px`}><Svg w={17} h={17}><path d="M1 0v3h10V0M1 17v-3h10v3M1 5.500h10v6H1zM14.500 0v4M14.500 9v8" stroke="#eee" strokeWidth="1.200" /><path d="M13 5h3v3h-3z" fill="#fff" /></Svg></button>
      <button aria-label="Edge" className={app}>
        <Svg w={24} h={24}><defs><linearGradient id="edge" x2="1" y2=".6"><stop stopColor="#1aa5e8" /><stop offset=".55" stopColor="#25c0c4" /><stop offset="1" stopColor="#67df52" /></linearGradient></defs>
          <circle cx="12" cy="12" r="12" fill="url(#edge)" /><path d="M.3 14C0 7 6 5.500 10 6.500c5 1 6 5 4.500 7.500-1 2-.5 3.500 2 4.200 2.200.6 4.500-.2 5.500-1C20 22 16 24 12 24 6 24 .8 20 .3 14z" fill="#1267b8" /><path d="M8 12c-2 5 1 9.500 6 10.500-6 2.500-12-3-10.500-8.500C4.500 10 8 9 8 12z" fill="#1a8ad6" /><path d="M10.500 11.500c1-2 4-1 4 .8 0 1-.8 1.500-.8 2.700 0 2.200 2.300 3.300 4.500 3.300-4 2-8.500-1.500-7.700-6.800z" fill="#332a24" /></Svg>
      </button>
      <button aria-label="File Explorer" className={app}><Svg w={22} h={19}><path d="M0 1.500Q0 .5 1 .5h7l2 2.500h10.500q1 0 1 1V18H0z" fill="#e8a823" /><path d="M0 5h21.500v13.500H0z" fill="#fbd568" /><path d="M4 18.500V11h14v7.500h-3.500V14h-7v4.500z" fill="#3e8fd0" /></Svg></button>
      <button aria-label="Store" className={app}><Svg w={23} h={24}><path d="M7 6V2.500Q7 1 8.500 1h6Q16 1 16 2.500V6" stroke="#35b5ec" strokeWidth="2" /><path d="M0 5h23v15q0 3-3 3H3q-3 0-3-3z" fill="#f2f3f5" /><path d="M6.500 9.500H11V14H6.500z" fill="#f25022" /><path d="M12 9.500h4.500V14H12z" fill="#7fba00" /><path d="M6.500 15H11v4.500H6.500z" fill="#00a4ef" /><path d="M12 15h4.500v4.500H12z" fill="#ffb900" /></Svg></button>
      <button aria-label="Mail" className={app}><Svg w={25} h={24}><path d="M0 8L12.500 0 25 8v2H0z" fill="#1668b8" /><path d="M2 8h21v9H2z" fill="#fff" /><path d="M0 8l12.500 8L25 8v15H0z" fill="#33b6f0" /><path d="M25 8v15H0l15-8.500z" fill="#1a92e0" opacity=".6" /></Svg></button>
      <button aria-label="Chrome" className={app}><Svg w={24} h={24}><circle cx="12" cy="12" r="12" fill="#34a853" /><path d="M12 12L1.600 6A12 12 0 0 1 22.400 6z" fill="#e33b2e" /><path d="M12 6.500h10.700A12 12 0 0 1 12 24l4.800-9z" fill="#fbc116" /><path d="M1.600 6L7.200 15 12 6.500 22.700 6.500A12 12 0 0 0 1.600 6z" fill="#e33b2e" /><circle cx="12" cy="12" r="5.600" fill="#fff" /><circle cx="12" cy="12" r="4.400" fill="#3f7de8" /></Svg></button>
      <button aria-label="WhatsApp, 7 unread" className={`${app} relative`}>
        <Svg w={25} h={25}><path d="M1 24.500l1.700-6A11.700 11.700 0 1 1 7 22.800z" fill="#fff" /><path d="M3.300 22.200l1.200-4.200a9.700 9.700 0 1 1 3.300 3z" fill="#40c351" /><path d="M8.500 7.200c-1 .8-1.500 2.200-.8 4 1.300 3.300 4 5.600 7.300 6.400 1.800.4 3.300-1 3.300-2.400 0-.5-2.600-1.800-3-1.500l-1.300 1.400c-2-.7-3.300-2-4.200-3.800l1-1.400c.2-.5-.9-2.900-1.300-2.900z" fill="#fff" /></Svg>
        <span className="absolute right-0.5 bottom-1 flex size-4 items-center justify-center rounded-full border border-[#b5b5b5] bg-[#2a2523] text-[11px] leading-none font-bold">7</span>
      </button>
      <button aria-label="Tableau" className="ml-px flex h-full w-12 shrink-0 items-center justify-center border-b-2 border-[#76b9ed] bg-[#5a524c]"><TableauMark size={22} /></button>
      <div className="ml-auto flex h-full items-center">
        <button className="flex items-center text-[14px]">
          <span className="relative"><Svg w={25} h={24}><path d="M6 23.500a5.500 5.500 0 0 1-.5-11A7.500 7.500 0 0 1 20 13a5.300 5.300 0 0 1-.5 10.500z" fill="#a9c9f5" /><path d="M1 20q2 3.500 5 3.500h13.500q4 0 5-3.500z" fill="#dbe8fb" /></Svg><span className="absolute top-0 right-0 flex size-3 items-center justify-center rounded-full bg-[#c62a20] text-[9px] leading-none">1</span></span>
          <span className="ml-2">31°C</span><span className="ml-2">Mostly cloudy</span>
        </button>
        <button aria-label="Show hidden icons" className="ml-6"><Svg w={12} h={7}><path d="M.5 6.500L6 1l5.500 5.500" stroke="#fff" strokeWidth="1.200" /></Svg></button>
        <button aria-label="Camera" className="ml-3"><Svg w={12} h={16}><path d="M1 5.500h7v6H1zM8 7.500l3-1.500v5l-3-1.500M2 2.500q4-3 7 0M2 14q4 3 7 0" stroke="#fff" /></Svg></button>
        <button aria-label="Battery" className="ml-2.5"><Svg w={16} h={13}><path d="M5 4.500h9.500v7H4M15.500 7v2M1.500 1v3M4.500 1v3M.5 3.500h5v2q0 2-2.500 2t-2.500-2zM3 7.500v4h2" stroke="#fff" /><path d="M6 8h3v2.500H6z" fill="#fff" /></Svg></button>
        <button aria-label="Network" className="ml-2"><Svg w={16} h={16}><circle cx="7.500" cy="7.500" r="7" stroke="#fff" /><ellipse cx="7.500" cy="7.500" rx="3" ry="7" stroke="#fff" /><path d="M.5 5h14M.5 10h8" stroke="#fff" /><circle cx="12" cy="12" r="3.500" fill="#332a24" stroke="#fff" /><path d="M10 10l4 4" stroke="#fff" /></Svg></button>
        <button aria-label="Volume" className="ml-[7px]"><Svg w={17} h={14}><path d="M.5 5v4.500h2.500L6.500 13V1.500L3 5zM8.500 5q1.500 2.200 0 4.500M10.800 3q3 4.200 0 8.500" stroke="#fff" /><path d="M13.200 1q4.500 6.200 0 12.500" stroke="#888" /></Svg></button>
        <button className="ml-2.5 text-[12px]">ENG</button>
        <button className="ml-[11px] w-[60px] text-center text-[11px] leading-[18px]"><time className="block">18:10</time><time className="block">19-10-2023</time></button>
        <button aria-label="Notifications" className="ml-4"><Svg w={17} h={17}><path d="M.6 1h15.800v11h-5.400l-2.500 3.500L6 12H.6z" stroke="#fff" strokeWidth="1.200" /></Svg></button>
        <button aria-label="Show desktop" className="ml-5 h-full w-[5px] border-l border-[#6b625a]" />
      </div>
    </footer>
  );
}

export default function App() {
  return (
    <div className="flex h-screen flex-col overflow-hidden bg-[#f4f4f4] font-['Open_Sans','Noto_Sans',sans-serif]">
      <TitleAndMenu />
      <div className="relative flex min-h-0 flex-1 flex-col">
        <Toolbar />
        <main className="flex min-h-0 flex-1">
          <DataPane />
          <Cards />
          <div className="ml-1.5 flex min-w-0 flex-1 flex-col">
            <Shelves />
            <Sheet />
          </div>
        </main>
        <ShowMe />
      </div>
      <div className="relative shrink-0">
        <SheetTabs />
        <div className="pointer-events-none absolute right-[68px] bottom-5 w-[237px] whitespace-nowrap text-[#8a8a8a]/60">
          <p className="text-[19px] leading-[26px]">Activate Windows</p>
          <p className="text-[14px] leading-[19px]">Go to Settings to activate Windows.</p>
        </div>
      </div>
      <StatusBar />
      <Taskbar />
    </div>
  );
}
